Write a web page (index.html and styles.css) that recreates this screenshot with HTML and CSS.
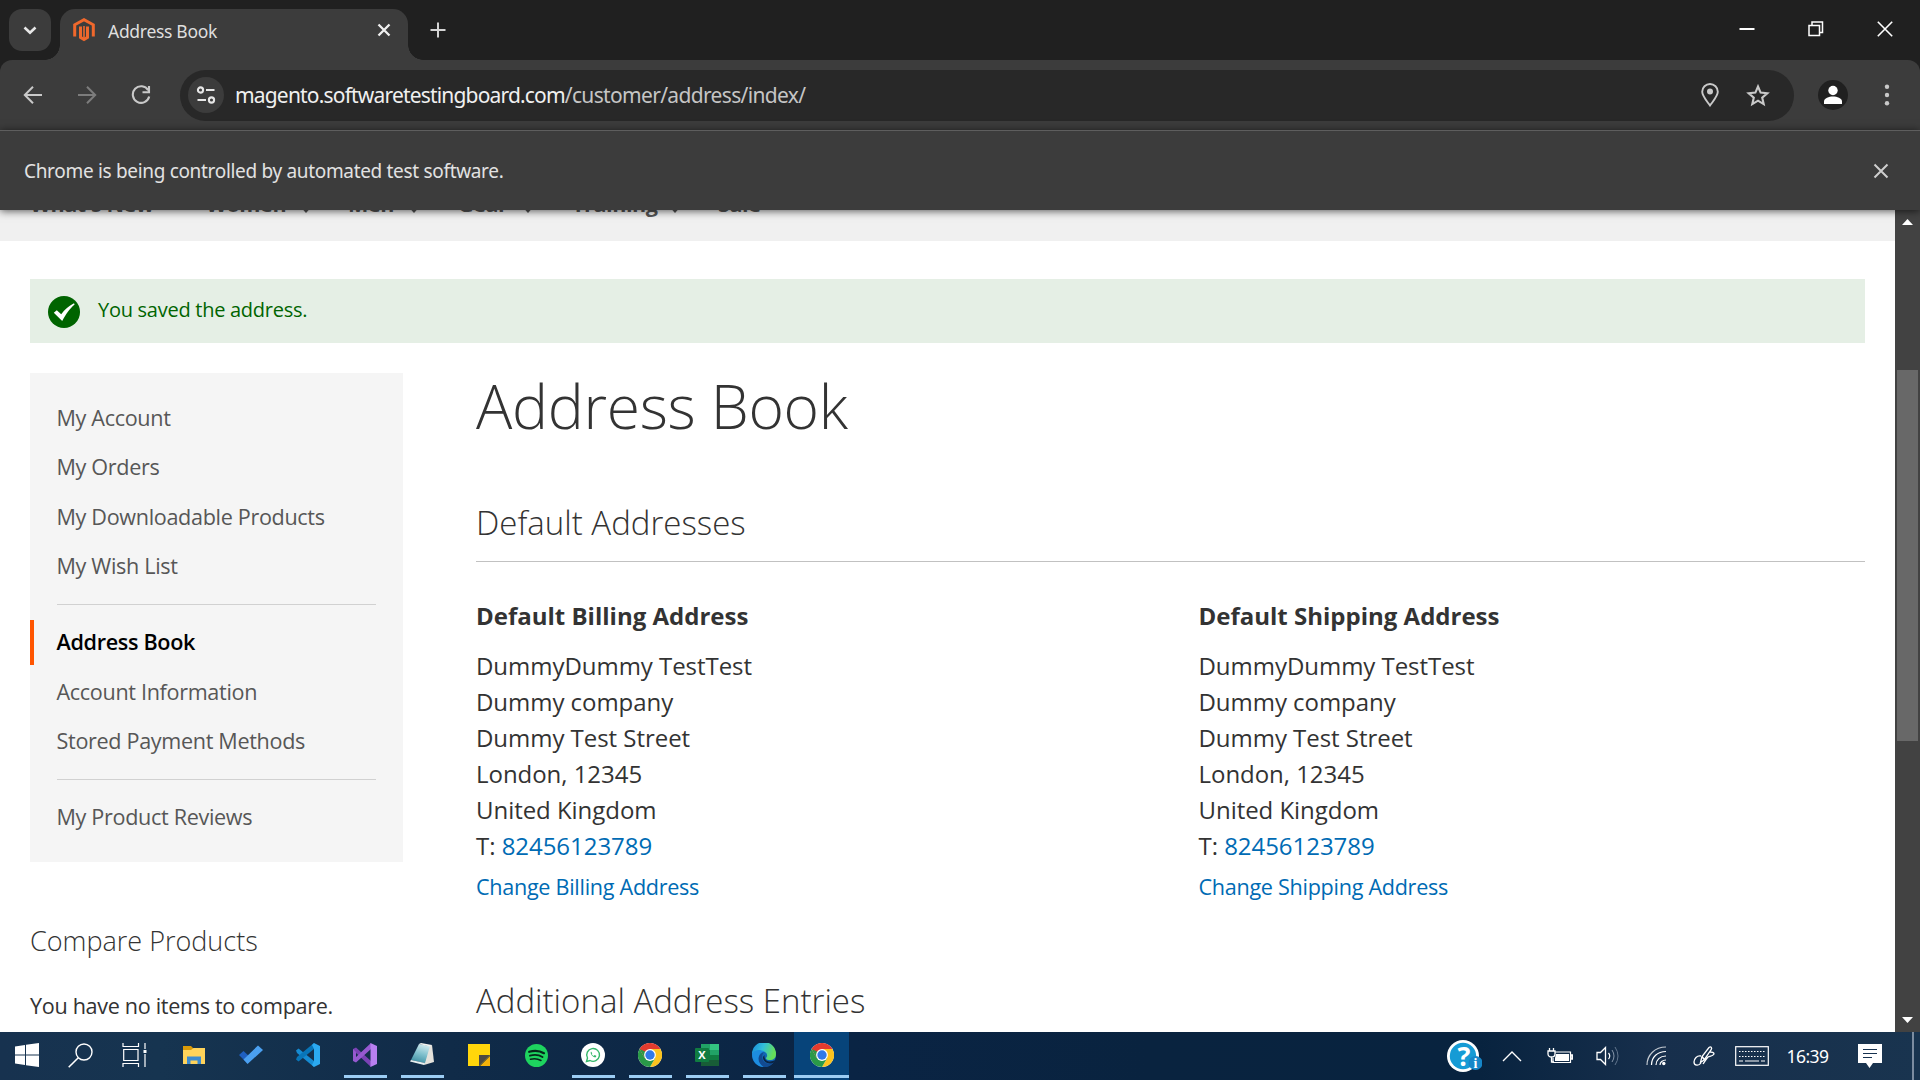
FILE: index.html
```html
<!DOCTYPE html>
<html lang="en">
<head>
<meta charset="utf-8">
<title>Address Book</title>
<link rel="stylesheet" href="styles.css">
</head>
<body>
<svg width="0" height="0" class="defs" aria-hidden="true">
  <defs>
    <symbol id="chrome" viewBox="0 0 24 24">
      <circle cx="12" cy="12" r="12" fill="#fff"/>
      <path d="M12 12 1.6 6A12 12 0 0 1 22.4 6Z" fill="#e33b2e"/>
      <path d="M12 6H22.4A12 12 0 0 1 12 24L17.2 15Z" fill="#fcc31e"/>
      <path d="M6.8 15 1.6 6A12 12 0 0 0 12 24L17.2 15Z" fill="#2a9a48"/>
      <path d="M1.6 6 6.8 15 12 6Z" fill="#e33b2e"/>
      <path d="M1.6 6 6.8 15 8 9Z" fill="#2a9a48"/>
      <circle cx="12" cy="12" r="5.9" fill="#fff"/>
      <circle cx="12" cy="12" r="4.7" fill="#3079e8"/>
    </symbol>
  </defs>
</svg>
<div class="screen">
  <header class="tabstrip">
    <div class="tab-search"><svg width="14" height="9" viewBox="0 0 14 9"><path d="M1.500 1.500 7 6.700 12.500 1.500" fill="none" stroke="#e8e8e8" stroke-width="2.6"/></svg></div>
    <div class="tab">
      <svg class="favicon" width="22" height="24" viewBox="0 0 22 24"><g fill="none" stroke="#f0682c" stroke-width="3"><path d="M1.7 18.5V6.8L11 1.7 20.3 6.8V18.5"/><path d="M7.5 8.5V19.4L11 21.5 14.5 19.4V8.5"/></g><path d="M11 8V20" stroke="#f0682c" stroke-width="1.6"/></svg>
      <span class="tab-title">Address Book</span>
      <svg class="tab-close" width="14" height="14" viewBox="0 0 14 14"><path d="M1.5 1.5 12.5 12.5M12.5 1.5 1.5 12.5" stroke="#f0f0f0" stroke-width="2.3"/></svg>
    </div>
    <svg class="tab-new" width="16" height="16" viewBox="0 0 16 16"><path d="M8 .5V15.5M.5 8H15.5" stroke="#d4d4d4" stroke-width="2"/></svg>
    <div class="window-buttons">
      <svg width="16" height="16" viewBox="0 0 16 16"><path d="M.5 8H15.5" stroke="#fff" stroke-width="2"/></svg>
      <svg width="16" height="16" viewBox="0 0 16 16"><path d="M1 4.500H11.500V14.500H1ZM4 4V1H14.500V11.500H12" fill="none" stroke="#fff" stroke-width="1.5"/></svg>
      <svg width="16" height="16" viewBox="0 0 16 16"><path d="M.8.8 15.200 15.200M15.200.8.8 15.200" stroke="#fff" stroke-width="1.6"/></svg>
    </div>
  </header>

  <div class="toolbar-back"><nav class="toolbar">
    <svg class="nav-icon" width="20" height="20" viewBox="0 0 20 20"><path d="M19 10H2.500M10 1.800 1.800 10 10 18.200" fill="none" stroke="#c9c9c9" stroke-width="2"/></svg>
    <svg class="nav-icon" width="20" height="20" viewBox="0 0 20 20"><path d="M1 10H17.500M10 1.800 18.200 10 10 18.200" fill="none" stroke="#7c7c7c" stroke-width="2"/></svg>
    <svg class="nav-icon" width="20" height="20" viewBox="0 0 20 20"><path d="M17.200 5.200A8.300 8.300 0 1 0 18.200 11.500M18 1V7.200H11.500" fill="none" stroke="#c9c9c9" stroke-width="2.100"/></svg>
    <div class="omnibox">
      <div class="site-info"><svg width="20" height="18" viewBox="0 0 20 18"><g fill="none" stroke="#e6e6e6" stroke-width="2.100"><circle cx="4.500" cy="4" r="2.600"/><path d="M10 4H18.500M1.500 14H10"/><circle cx="15.500" cy="14" r="2.600"/></g></svg></div>
      <div class="url"><span class="host">magento.softwaretestingboard.com</span><span class="path">/customer/address/index/</span></div>
      <svg class="pin" width="18" height="24" viewBox="0 0 18 24"><path d="M9 22.500C5 17 1.200 12.800 1.200 8.800a7.800 7.800 0 0 1 15.600 0C16.800 12.800 13 17 9 22.500Z" fill="none" stroke="#c9c9c9" stroke-width="1.900"/><circle cx="9" cy="8.500" r="3" fill="#c9c9c9"/></svg>
      <svg class="star" width="24" height="23" viewBox="0 0 24 23"><path d="M12 2.500 14.600 8.600 21.300 9.200 16.200 13.600 17.700 20.100 12 16.700 6.300 20.100 7.800 13.600 2.700 9.200 9.400 8.600Z" fill="none" stroke="#c9c9c9" stroke-width="2.100"/></svg>
    </div>
    <svg class="profile" width="30" height="30" viewBox="0 0 30 30"><circle cx="15" cy="15" r="15" fill="#202020"/><circle cx="15" cy="10.500" r="4.700" fill="#fff"/><path d="M6 24V21.500C6 18 11 16.500 15 16.500S24 18 24 21.500V24Z" fill="#fff"/></svg>
    <svg class="menu" width="6" height="22" viewBox="0 0 6 22"><g fill="#c9c9c9"><circle cx="3" cy="2.700" r="2.200"/><circle cx="3" cy="11" r="2.200"/><circle cx="3" cy="19.300" r="2.200"/></g></svg>
  </nav></div>

  <div class="infobar">
    <span class="info-text">Chrome is being controlled by automated test software.</span>
    <svg width="16" height="16" viewBox="0 0 16 16"><path d="M1.500 1.500 14.500 14.500M14.500 1.500 1.500 14.500" stroke="#cfcfcf" stroke-width="2"/></svg>
  </div>

  <div class="viewport">
    <div class="page">
      <div class="site-nav">
        <span class="nav-new">What's New</span>
        <span class="nav-women">Women</span>
        <span class="nav-men">Men</span>
        <span class="nav-gear">Gear</span>
        <span class="nav-training">Training</span>
        <span class="nav-sale">Sale</span>
      </div>
      <div class="message">
        <svg width="32" height="32" viewBox="0 0 32 32"><circle cx="16" cy="16" r="16" fill="#006400"/><path d="M5.800 16.800 8.800 14.300 13.200 18.200C17 13.500 20.500 10 26 7.300L26.600 8.500C21 13.500 18 18 14.200 25Z" fill="#fff"/></svg>
        <span>You saved the address.</span>
      </div>
      <div class="columns">
        <aside class="sidebar">
          <ul class="account-nav">
            <li><a>My Account</a></li>
            <li><a>My Orders</a></li>
            <li><a>My Downloadable Products</a></li>
            <li><a>My Wish List</a></li>
            <li class="rule"></li>
            <li class="current"><a>Address Book</a></li>
            <li><a>Account Information</a></li>
            <li><a>Stored Payment Methods</a></li>
            <li class="rule"></li>
            <li><a>My Product Reviews</a></li>
          </ul>
          <h3 class="compare-title">Compare Products</h3>
          <p class="compare-empty">You have no items to compare.</p>
        </aside>
        <main class="main">
          <h1>Address Book</h1>
          <h2 class="section-title">Default Addresses</h2>
          <div class="addresses">
            <section>
              <h4>Default Billing Address</h4>
              <address>DummyDummy TestTest<br>Dummy company<br>Dummy Test Street<br>London, 12345<br>United Kingdom<br>T: <a>82456123789</a></address>
              <a class="change">Change Billing Address</a>
            </section>
            <section>
              <h4>Default Shipping Address</h4>
              <address>DummyDummy TestTest<br>Dummy company<br>Dummy Test Street<br>London, 12345<br>United Kingdom<br>T: <a>82456123789</a></address>
              <a class="change">Change Shipping Address</a>
            </section>
          </div>
          <h2 class="additional-title">Additional Address Entries</h2>
        </main>
      </div>
    </div>
    <div class="scrollbar">
      <svg width="11" height="6" viewBox="0 0 11 6"><path d="M0 6 5.500 0 11 6Z" fill="#fff"/></svg>
      <div class="thumb"></div>
      <svg width="11" height="6" viewBox="0 0 11 6"><path d="M0 0 5.500 6 11 0Z" fill="#fff"/></svg>
    </div>
  </div>

  <footer class="taskbar">
    <div class="system-buttons">
      <div><svg width="24" height="24" viewBox="0 0 24 24"><path d="M0 3.400 10 2V11.500H0ZM11 1.800 24 0V11.500H11ZM0 12.500H10V22L0 20.600ZM11 12.500H24V24L11 22.200Z" fill="#fff"/></svg></div>
      <div><svg width="25" height="25" viewBox="0 0 25 25"><circle cx="16" cy="9" r="8" fill="none" stroke="#fff" stroke-width="1.400"/><path d="M10.300 14.700.7 24.300" stroke="#fff" stroke-width="1.600"/></svg></div>
      <div><svg width="25" height="24" viewBox="0 0 25 24"><path d="M1 0V3.500H16.500V0M1 24V20.500H16.500V24M1.700 6.500H16V17.500H1.700ZM23 0V6M23 11V24" fill="none" stroke="#fff" stroke-width="1.200"/><path d="M21.500 7H24.500V10H21.500Z" fill="#fff"/></svg></div>
    </div>
    <div class="apps">
      <div><svg width="24" height="24" viewBox="0 0 24 24"><path d="M1 3H9L11.500 5.500V9H1Z" fill="#d99a08"/><path d="M1 7H9L11.500 5H23V21H1Z" fill="#ffd35a"/><path d="M5 21V13.500H19V21H15.500V17.500H8.500V21Z" fill="#3c8bd0"/></svg></div>
      <div><svg width="24" height="24" viewBox="0 0 24 24"><path d="M0 12 4.500 8 13 16 8.500 20.500Z" fill="#1f5fc0"/><path d="M4.500 16.500 19 2.500 24 7 8.500 21Z" fill="#4ba0f0"/></svg></div>
      <div><svg width="24" height="24" viewBox="0 0 24 24"><path d="M0 7.500 2.500 5.500 18 18V24L1 10Z" fill="#168bd2"/><path d="M0 16.500 2.500 18.500 18 6V0L1 14Z" fill="#0875b8"/><path d="M18 0 24 3V21L18 24 16 22 18 18V6L16 2Z" fill="#2ba9f0"/></svg></div>
      <div class="running"><svg width="24" height="24" viewBox="0 0 24 24"><path d="M0 6 3 4.500 18 18V24L3 10V15L0 18Z" fill="#7a42b5"/><path d="M0 18 3 19.500 18 6V0L3 14V9L0 6Z" fill="#9659d0"/><path d="M17.500 0 24 3V21L17.500 24Z" fill="#b880f0"/></svg></div>
      <div class="running"><svg width="24" height="24" viewBox="0 0 24 24"><defs><linearGradient id="note-cover" x1=".6" y1="0" x2=".3" y2="1"><stop stop-color="#cfe9ee"/><stop offset=".5" stop-color="#7fc0cd"/><stop offset="1" stop-color="#3d8fa3"/></linearGradient></defs><path d="M19 3 22 2 24 19 14 22Z" fill="#e4e2dc"/><path d="M9 1 20 3 15 20 1 17Z" fill="url(#note-cover)"/><path d="M1 17 15 20 14 22 0 18.500Z" fill="#e8eff0"/><path d="M9 1 11 0 22 2 20 3.500Z" fill="#f4f4f0"/></svg></div>
      <div><svg width="22" height="22" viewBox="0 0 22 22"><path d="M0 0H22V11L11 22H0Z" fill="#ffd60b"/><path d="M11 22V11H22Z" fill="#4d4a42"/><path d="M12 22 22 12V22Z" fill="#f5b20a"/></svg></div>
      <div><svg width="23" height="23" viewBox="0 0 23 23"><circle cx="11.500" cy="11.500" r="11.500" fill="#1ed45f"/><g fill="none" stroke="#07271a" stroke-linecap="round"><path d="M4.200 7.800C9 6.300 15 6.800 19 9.200" stroke-width="2.200"/><path d="M5 11.700C9 10.500 14 10.900 17.500 13" stroke-width="1.900"/><path d="M5.500 15.300C9 14.300 13 14.800 16 16.500" stroke-width="1.500"/></g></svg></div>
      <div class="running"><svg width="24" height="24" viewBox="0 0 24 24"><circle cx="12" cy="12" r="12" fill="#fff"/><path d="M5.500 18.500 6.500 15A6.400 6.400 0 1 1 9 17.500Z" fill="none" stroke="#35b86b" stroke-width="1.400"/><path d="M10 8.500C8.500 11 12.500 15 15 14.200L15.300 12.800 13.500 12 12.700 13C11.500 12.500 11 11.800 10.700 11L11.300 10.200Z" fill="#35b86b"/></svg></div>
      <div class="running"><svg width="24" height="24"><use href="#chrome"/></svg></div>
      <div class="running"><svg width="24" height="24" viewBox="0 0 24 24"><path d="M6 1H15V12H6Z" fill="#21a366"/><path d="M15 1H24V7H15Z" fill="#33c481"/><path d="M6 7H15V17H6Z" fill="#107c41"/><path d="M15 7H24V12H15Z" fill="#21a366"/><path d="M15 12H24V18H15Z" fill="#107c41"/><path d="M6 17H24V23H6Z" fill="#185c37"/><rect y="5" width="14" height="14" rx="1" fill="#107c41"/><text x="7" y="16" class="excel-letter">X</text></svg></div>
      <div class="running"><svg width="24" height="24" viewBox="0 0 24 24"><defs><linearGradient id="edge-top" x1="0" y1="0" x2="1" y2=".3"><stop stop-color="#1687d9"/><stop offset=".5" stop-color="#32bedb"/><stop offset="1" stop-color="#65df58"/></linearGradient></defs><circle cx="12" cy="12" r="12" fill="#1266b5"/><path d="M0 11A12 12 0 0 1 24 11C24 15.500 21 17.500 16.500 17C13.500 16.500 13.500 15 15 13.500C16 10 12 7.500 8 8C4 8.200 1 10 0 11Z" fill="url(#edge-top)"/><path d="M0 11C2 6.500 9 6 12.500 9C9 8.500 6.500 12 7 16C7.500 20 10 23 12 24C5 24 0 18 0 11Z" fill="#1d8de0"/><path d="M12 9.500C9 11.500 9.500 18 14 20C17 21.500 20 20.500 22.500 18C20 22.500 16 24 12 24C4 20 5.500 10.500 12 9.500Z" fill="#124a91"/><path d="M12.500 12C12 15 13.500 18 17.500 18.500C20 18.500 22 17.500 23 17L22 19.500C17 22 11 19.500 11 14Z" fill="#0c2443"/></svg></div>
      <div class="running active"><svg width="24" height="24"><use href="#chrome"/></svg></div>
    </div>
    <div class="tray">
      <div><svg width="36" height="32" viewBox="0 0 36 32"><circle cx="17" cy="16" r="16" fill="#fff"/><circle cx="17" cy="16" r="13.200" fill="#159bd5"/><text x="18" y="26" class="help-mark">?</text><circle cx="29.500" cy="23" r="7" fill="#1686c8"/><text x="29.500" y="28" class="help-info">i</text></svg></div>
      <div><svg width="20" height="12" viewBox="0 0 20 12"><path d="M1 11 10 2 19 11" fill="none" stroke="#fff" stroke-width="1.400"/></svg></div>
      <div><svg width="26" height="18" viewBox="0 0 26 18"><path d="M8 5H23.500V15.500H6V11" fill="none" stroke="#fff" stroke-width="1.200"/><path d="M9 7H22V14H8V11Z" fill="#fff"/><path d="M24 8H25.500V12H24ZM2.500 1V4M6.500 1V4M1 4H8V7C8 11 1 11 1 7ZM4.500 10V15H7" fill="none" stroke="#fff" stroke-width="1.300"/></svg></div>
      <div><svg width="24" height="20" viewBox="0 0 24 20"><path d="M1 6.500H4.500L9.500 1.500V18.500L4.500 13.500H1Z" fill="none" stroke="#fff" stroke-width="1.300"/><g fill="none"><path d="M12.500 7Q15 10 12.500 13" stroke="#fff" stroke-width="1.200"/><path d="M16 4Q20 10 16 16" stroke="#8797ab"/><path d="M19 1Q25 10 19 19" stroke="#61758d"/></g></svg></div>
      <div><svg class="wifi" width="21" height="20" viewBox="0 0 21 20"><g fill="none" stroke="#fff" stroke-width="1.200"><path d="M1 19C1 9 9 1 20 1" opacity=".75"/><path d="M5.500 19C5.500 11 11.500 5.500 20 5.500"/><path d="M10 19C10 14 14 10 20 10"/><path d="M14 19C14 16.500 16.500 14 20 14"/></g><circle cx="17.800" cy="17.500" r="1.700" fill="#fff"/></svg></div>
      <div><svg width="22" height="22" viewBox="0 0 22 22"><path d="M7.500 17.500 9 11.500 16 2.500C18 1 19.500 3 18 5L11 15ZM9 11.500 11 14M8 11C4 10 1 14 1 17C1 21 6 21 8 18M10 19C12 16 13 14 15 12C18 11 20 11 21 9C21 7 19 7 17 7" fill="none" stroke="#fff" stroke-width="1.300"/></svg></div>
      <div><svg width="34" height="20" viewBox="0 0 34 20"><rect x=".7" y=".7" width="32.600" height="18.600" fill="none" stroke="#fff" stroke-width="1.200"/><path d="M4 5.500H30M4 10.500H30" stroke="#fff" stroke-width="1.200" stroke-dasharray="1.500 1.500"/><path d="M4 15H8M10 15H24M26 15H30" stroke="#fff" stroke-width="1.200"/></svg></div>
      <time>16:39</time>
      <div class="notice"><svg width="24" height="24" viewBox="0 0 24 24"><path d="M0 0H24V19H15L11.500 24 8 19H0Z" fill="#fff"/><path d="M5 5.500H19M5 9.500H19M5 13.500H14" stroke="#173250" stroke-width="1.200"/></svg></div>
      <i class="show-desktop"></i>
    </div>
  </footer>
</div>
</body>
</html>
```
FILE: styles.css
```css
* { box-sizing: border-box; }
html, body { margin: 0; }
body { width: 1920px; height: 1080px; overflow: hidden; font-family: "Open Sans", sans-serif; color: #333; background: #fff; }
svg { display: block; flex: none; }
.defs { position: absolute; }
h1, h2, h3, h4, p, ul, address { margin: 0; padding: 0; font-style: normal; list-style: none; }
.screen { display: flex; flex-direction: column; width: 1920px; height: 1080px; }

/* Browser chrome */
.tabstrip { display: flex; height: 60px; padding: 9px 0 0 9px; background: #202020; }
.tab-search { display: flex; align-items: center; justify-content: center; width: 42px; height: 42px; border-radius: 13px; background: #3c3c3c; }
.tab { position: relative; display: flex; align-items: center; width: 348px; height: 51px; margin-left: 9px; padding: 0 17px 9px 13px; border-radius: 15px 15px 0 0; background: #3c3c3c; }
.tab::before, .tab::after { content: ""; position: absolute; bottom: 0; width: 15px; height: 15px; }
.tab::before { left: -15px; background: radial-gradient(circle at 0 0, transparent 14.5px, #3c3c3c 15px); }
.tab::after { right: -15px; background: radial-gradient(circle at 100% 0, transparent 14.5px, #3c3c3c 15px); }
.tab-title { margin: 1px 0 0 13px; font-family: "Noto Sans", sans-serif; font-size: 17.5px; letter-spacing: -.3px; color: #dfdfdf; white-space: nowrap; }
.tab-close { margin-left: auto; }
.tab-new { margin: 13px 0 0 22px; }
.window-buttons { display: flex; gap: 53px; margin: 12px 27px 0 auto; }
.toolbar-back { background: #202020; }
.toolbar { display: flex; align-items: center; height: 70px; padding: 0 30px 0 23px; border-radius: 12px 12px 0 0; background: #3c3c3c; }
.nav-icon { margin-right: 34px; }
.omnibox { display: flex; align-items: center; width: 1614px; height: 51px; margin-left: -5px; padding: 0 24px 0 8px; border-radius: 26px; background: #282828; }
.site-info { display: flex; align-items: center; justify-content: center; width: 36px; height: 36px; border-radius: 50%; background: #3c3c3c; }
.url { margin: -1px 0 0 11px; font-family: "Noto Sans", sans-serif; font-size: 21px; color: #c5c5c5; white-space: nowrap; }
.host { letter-spacing: -.82px; color: #f0f0f0; }
.path { letter-spacing: -.66px; }
.pin { margin-left: auto; }
.star { margin-left: 27px; }
.profile { margin-left: 24px; }
.menu { margin-left: auto; }
.infobar { position: relative; z-index: 1; display: flex; align-items: center; justify-content: space-between; height: 80px; padding: 0 31px 0 24px; border-top: 1px solid #5e5e5e; background: #3c3c3c; box-shadow: 0 1px 8px rgba(0, 0, 0, .65); }
.info-text { padding-top: 1px; font-family: "Noto Sans", sans-serif; font-size: 19px; letter-spacing: -.32px; color: #e2e2e2; }

/* Store page */
.viewport { display: flex; height: 822px; background: #fff; }
.page { width: 1895px; height: 822px; overflow: hidden; }
.site-nav { display: flex; height: 31px; padding-left: 30px; overflow: hidden; background: #f0f0f0; }
.site-nav span { flex: none; height: 30px; margin-top: -21px; font-size: 21.6px; letter-spacing: -.45px; line-height: 30px; font-weight: 700; color: #555; white-space: nowrap; }
.nav-new { width: 176px; }
.nav-women { width: 142px; }
.nav-men { width: 110px; }
.nav-gear { width: 114px; }
.nav-training { width: 146px; }
.nav-women, .nav-men, .nav-gear, .nav-training { display: flex; justify-content: space-between; }
.nav-women::after, .nav-men::after, .nav-gear::after, .nav-training::after { content: ""; width: 6px; height: 6px; margin: 14px 0 0; border: solid #555; border-width: 0 2px 2px 0; transform: rotate(45deg); }
.nav-women::after { margin-right: 38px; }
.nav-men::after { margin-right: 40px; }
.nav-gear::after { margin-right: 40px; }
.nav-training::after { margin-right: 39px; }
.message { display: flex; align-items: center; width: 1835px; height: 64px; margin: 38px 0 0 30px; padding: 2px 0 0 18px; background: #e5efe5; color: #006400; font-size: 20px; }
.message span { margin: -6px 0 0 18px; letter-spacing: -.27px; }
.columns { display: flex; padding: 30px 30px 0 30px; }
.sidebar { width: 373px; margin-right: 73px; flex: none; }
.account-nav { height: 489px; padding: 21px 27px 0 0; background: #f5f5f5; font-size: 21.6px; letter-spacing: -.33px; color: #575757; }
.account-nav li { height: 49.3px; padding-left: 26.5px; line-height: 47px; white-space: nowrap; }
.account-nav .rule { height: 1px; margin: 12.5px 0 13.5px 27px; background: #d1d1d1; }
.account-nav .current { height: 45px; margin: 15px 0 3px; padding-left: 22.5px; border-left: 4px solid #ff5501; line-height: 43px; font-weight: 600; color: #000; }
.compare-title { height: 40px; margin-top: 59px; font-size: 27px; line-height: 40px; font-weight: 300; }
.compare-empty { height: 32px; margin-top: 29px; font-size: 21.6px; letter-spacing: -.32px; line-height: 32px; white-space: nowrap; }
.main { width: 1389px; }
h1 { height: 68px; font-size: 60.5px; letter-spacing: -.3px; line-height: 66px; font-weight: 300; }
.section-title { height: 61px; margin-top: 60px; border-bottom: 1px solid #c1c1c1; font-size: 33px; line-height: 44px; font-weight: 300; }
.addresses { display: grid; grid-template-columns: 722.5px 1fr; margin-top: 36px; }
h4 { height: 36px; margin-bottom: 14px; font-size: 24px; line-height: 36px; font-weight: 700; }
address { font-size: 24px; letter-spacing: -.04px; line-height: 36px; }
.addresses a { color: #006bb4; }
.change { display: block; height: 40px; font-size: 21.6px; letter-spacing: -.29px; line-height: 46px; }
.additional-title { margin-top: 75px; height: 44px; font-size: 33px; line-height: 44px; font-weight: 300; }
.scrollbar { display: flex; flex-direction: column; align-items: center; width: 25px; height: 822px; padding: 9px 0; background: #424242; }
.thumb { width: 21px; height: 371px; margin: 145px 0 auto; background: #686868; }

/* Desktop taskbar */
.taskbar { display: flex; height: 48px; background: linear-gradient(90deg, #17324f 0, #163450 160px, #102b48 450px, #0a2444 850px, #09233f 1150px, #08233f 1480px, #172f4c 1660px, #19344f 1920px); }
.system-buttons { display: flex; }
.system-buttons div { display: flex; align-items: center; justify-content: center; width: 54px; padding: 0 1px 2px 0; }
.apps { display: flex; margin-left: 4px; }
.apps div { position: relative; display: flex; align-items: center; justify-content: center; width: 57px; padding: 0 1px 2px 0; }
.apps .running::after { content: ""; position: absolute; left: 7px; right: 7px; bottom: 2px; height: 3px; background: #9ccdf4; }
.apps .active { width: 55px; margin-left: 1px; padding-right: 0; background: #07447a; }
.apps .active::after { left: 0; right: 0; }
.excel-letter { font: 700 11px "Open Sans", sans-serif; text-anchor: middle; fill: #fff; }
.tray { display: flex; margin-left: auto; color: #fff; }
.tray div { display: flex; align-items: center; justify-content: center; width: 48px; }
.tray time { width: 64px; padding-right: 1px; font-family: "Noto Sans", sans-serif; font-size: 17.5px; letter-spacing: -.5px; line-height: 48px; text-align: center; }
.tray .notice { width: 60px; }
.show-desktop { width: 2px; margin: 0 6px 0 12px; background: #7c8ca0; }
.help-mark { font: 700 27px "Open Sans", sans-serif; text-anchor: middle; fill: #fff; }
.help-info { font: 700 14px "Liberation Serif", serif; text-anchor: middle; fill: #fff; }
```
